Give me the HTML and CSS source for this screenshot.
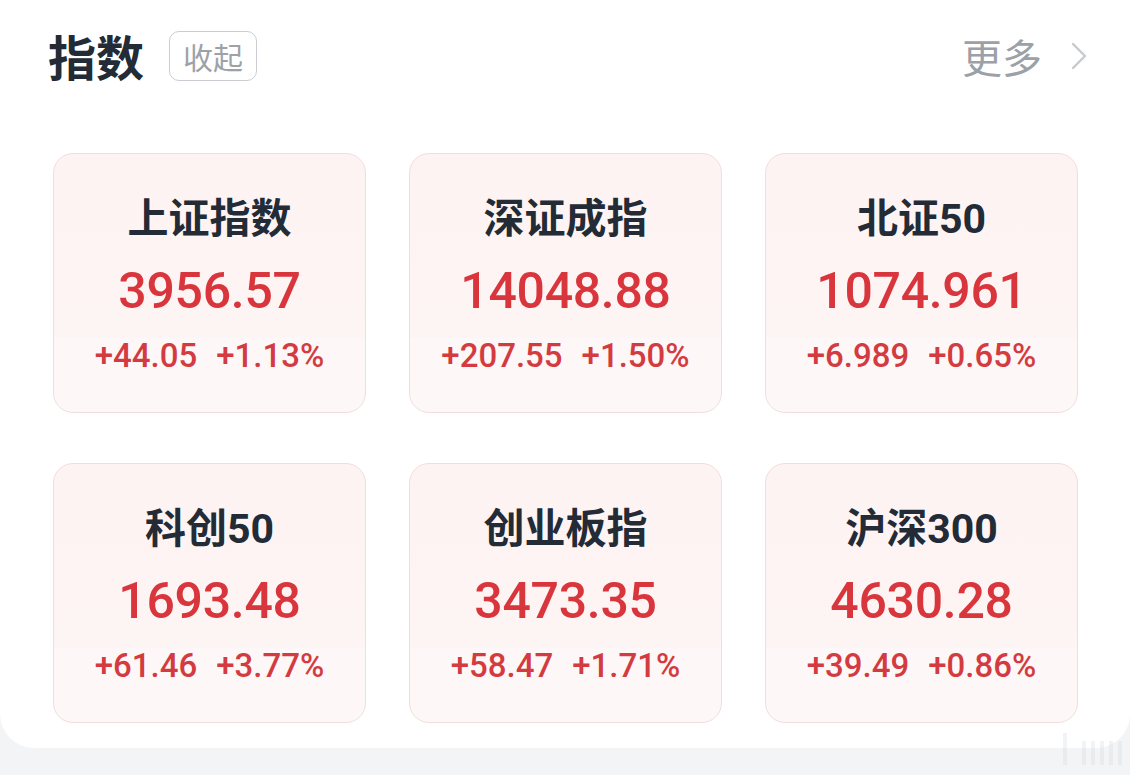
FILE: index.html
```html
<!DOCTYPE html>
<html lang="zh-CN">
<head>
<meta charset="utf-8">
<title>指数</title>
<link rel="stylesheet" href="styles.css">
</head>
<body>
<div class="panel">
  <div class="header">
    <div class="title">指数</div>
    <div class="collapse">收起</div>
    <div class="more">更多
      <svg class="chev" width="16" height="28" viewBox="0 0 16 28"><path d="M2 2 L14 14 L2 26" fill="none" stroke="#c6cacf" stroke-width="2.4" stroke-linecap="round" stroke-linejoin="round"/></svg>
    </div>
  </div>
  <div class="grid">
    <div class="card"><div class="name">上证指数</div><div class="value">3956.57</div><div class="change"><span>+44.05</span><span>+1.13%</span></div></div>
    <div class="card"><div class="name">深证成指</div><div class="value">14048.88</div><div class="change"><span>+207.55</span><span>+1.50%</span></div></div>
    <div class="card"><div class="name">北证50</div><div class="value">1074.961</div><div class="change"><span>+6.989</span><span>+0.65%</span></div></div>
    <div class="card"><div class="name">科创50</div><div class="value">1693.48</div><div class="change"><span>+61.46</span><span>+3.77%</span></div></div>
    <div class="card"><div class="name">创业板指</div><div class="value">3473.35</div><div class="change"><span>+58.47</span><span>+1.71%</span></div></div>
    <div class="card"><div class="name">沪深300</div><div class="value">4630.28</div><div class="change"><span>+39.49</span><span>+0.86%</span></div></div>
  </div>
</div>
<div class="watermark"><i class="tall"></i><i></i><i></i><i></i><i></i><i></i></div>
</body>
</html>
```
FILE: styles.css
```css
html, body {
  margin: 0;
  padding: 0;
}
body {
  width: 1130px;
  height: 775px;
  background: #f3f4f6;
  font-family: "Roboto", "Noto Sans CJK SC", sans-serif;
  overflow: hidden;
  position: relative;
}
.panel {
  background: #ffffff;
  height: 748px;
  box-sizing: border-box;
  border-radius: 0 0 34px 34px;
  padding: 31px 43px 0 48px;
}
.header {
  display: flex;
  align-items: center;
  height: 50px;
}
.title {
  font-family: "Noto Sans CJK SC", sans-serif;
  font-size: 48px;
  line-height: 50px;
  font-weight: 700;
  color: #222b36;
  margin-top: -3px;
}
.collapse {
  margin-left: 25px;
  box-sizing: border-box;
  width: 88px;
  height: 50px;
  border: 1.5px solid #c9cdd2;
  border-radius: 10px;
  display: flex;
  align-items: center;
  justify-content: center;
  font-family: "Noto Sans CJK SC", sans-serif;
  font-size: 30px;
  color: #9ca2a8;
}
.more {
  margin-left: auto;
  display: flex;
  align-items: center;
  font-family: "Noto Sans CJK SC", sans-serif;
  font-size: 40px;
  line-height: 50px;
  color: #9ba1a7;
}
.chev {
  margin-left: 29px;
}
.grid {
  display: grid;
  grid-template-columns: repeat(3, 313px);
  grid-auto-rows: 260px;
  column-gap: 43px;
  row-gap: 50px;
  margin-top: 72px;
  margin-left: 5px;
}
.card {
  box-sizing: border-box;
  border: 1.5px solid #f2dddd;
  border-radius: 20px;
  background: linear-gradient(#fdf3f3 0%, #fdf4f4 70%, #fdf7f7 72%, #fdf8f8 100%);
  display: flex;
  flex-direction: column;
  align-items: center;
  padding-top: 43px;
}
.name {
  font-size: 41px;
  line-height: 44px;
  font-weight: 700;
  color: #232b36;
}
.value {
  margin-top: 20px;
  font-size: 50px;
  line-height: 60px;
  font-weight: 500;
  color: #d8353c;
  letter-spacing: -0.3px;
}
.change {
  margin-top: 15px;
  display: flex;
  gap: 19px;
  font-size: 33px;
  line-height: 40px;
  font-weight: 500;
  color: #d43b41;
}
.watermark {
  position: absolute;
  right: 8px;
  bottom: 10px;
  display: flex;
  align-items: flex-end;
  gap: 5px;
  opacity: 0.35;
}
.watermark i {
  display: block;
  width: 4px;
  height: 24px;
  background: #dcdde0;
}
.watermark i.tall {
  height: 32px;
  margin-right: 10px;
}
```
